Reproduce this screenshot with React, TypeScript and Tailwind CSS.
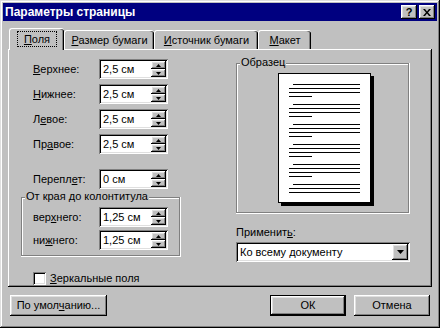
import type { ReactNode } from 'react';

const raised =
  'shadow-[inset_-1px_-1px_#000,inset_1px_1px_#fff,inset_-2px_-2px_#808080,inset_2px_2px_#dfdfdf]';
const panelEdge =
  'shadow-[inset_-1px_-1px_#000,inset_1px_1px_#fff,inset_-2px_-2px_#808080,inset_2px_2px_#c0c0c0]';
const sunken =
  'shadow-[inset_1px_1px_#808080,inset_-1px_-1px_#fff,inset_2px_2px_#000,inset_-2px_-2px_#dfdfdf]';
const etched =
  'shadow-[inset_-1px_-1px_#fff,inset_-2px_-2px_#808080,inset_1px_1px_#808080,inset_2px_2px_#fff]';

function Arrow({ down = false }: { down?: boolean }) {
  return (
    <svg width="5" height="3" viewBox="0 0 5 3" className="block">
      {down ? <path d="M0 0h5L2.5 3z" fill="#000" /> : <path d="M0 3h5L2.5 0z" fill="#000" />}
    </svg>
  );
}

function Spin({ value }: { value: string }) {
  return (
    <div className={`flex h-[20px] w-[69px] bg-white p-[2px] ${sunken}`}>
      <span className="flex-1 pl-[2px] leading-[16px]">{value}</span>
      <div className="flex w-[15px] flex-col">
        <div className={`flex h-[8px] items-center justify-center bg-[#c0c0c0] ${raised}`}>
          <Arrow />
        </div>
        <div className={`flex h-[8px] items-center justify-center bg-[#c0c0c0] ${raised}`}>
          <Arrow down />
        </div>
      </div>
    </div>
  );
}

function Field({ label, value }: { label: ReactNode; value: string }) {
  return (
    <div className="flex h-[20px] items-center">
      <span className="w-[66px]">{label}</span>
      <Spin value={value} />
    </div>
  );
}

function Tab({ children, width, active = false }: { children: ReactNode; width: string; active?: boolean }) {
  return (
    <div
      className={`flex items-center justify-center rounded-t-[3px] border-l border-t border-white bg-[#c0c0c0] shadow-[inset_-1px_0_#000,inset_-2px_0_#808080] ${width} ${
        active ? 'relative z-10 -mb-px h-[22px] pb-[2px]' : 'h-[19px]'
      }`}
    >
      {children}
    </div>
  );
}

function Button({ children, width, primary = false }: { children: ReactNode; width: string; primary?: boolean }) {
  return (
    <div
      className={`flex h-[21px] items-center justify-center bg-[#c0c0c0] ${width} ${
        primary ? 'border border-black' : ''
      } ${raised}`}
    >
      {children}
    </div>
  );
}

function TextBlock({ lines }: { lines: number }) {
  return (
    <div className="flex flex-col gap-[3px]">
      <div className="ml-[4px] h-px w-[67px] bg-black" />
      <div className="h-px w-[71px] bg-black" />
      <div className="h-px w-[71px] bg-black" />
      {lines > 3 && <div className="h-px w-[23px] bg-black" />}
    </div>
  );
}

export default function App() {
  return (
    <div
      className={`h-[328px] w-[440px] bg-[#c0c0c0] p-[3px] font-['Liberation_Sans',Arial,sans-serif] text-[11px] text-black shadow-[inset_-1px_-1px_#000,inset_1px_1px_#dfdfdf,inset_-2px_-2px_#808080,inset_2px_2px_#fff]`}
    >
      {/* title bar */}
      <div className="flex h-[18px] items-center justify-between bg-[#000080] pl-[2px] pr-[2px]">
        <span className="text-[12px] font-bold text-white">Параметры страницы</span>
        <div className="flex gap-[2px]">
          <div className={`flex h-[14px] w-[16px] items-center justify-center bg-[#c0c0c0] text-[11px] font-bold leading-none ${raised}`}>
            ?
          </div>
          <div className={`flex h-[14px] w-[16px] items-center justify-center bg-[#c0c0c0] ${raised}`}>
            <svg width="8" height="7" viewBox="0 0 8 7">
              <path d="M0 0h2l2 2.5L6 0h2L5 3.5 8 7H6L4 4.5 2 7H0l3-3.5z" fill="#000" />
            </svg>
          </div>
        </div>
      </div>

      <div className="mx-[5px] mt-[7px]">
        {/* tabs */}
        <div className="flex h-[21px] items-end pl-px">
          <Tab width="w-[55px]" active>
            <span className="px-[6px] leading-[14px] outline outline-1 outline-dotted outline-black">
              <span className="underline">П</span>оля
            </span>
          </Tab>
          <Tab width="w-[90px]">
            <span>
              <span className="underline">Р</span>азмер бумаги
            </span>
          </Tab>
          <Tab width="w-[104px]">
            <span>
              <span className="underline">И</span>сточник бумаги
            </span>
          </Tab>
          <Tab width="w-[53px]">
            <span>
              <span className="underline">М</span>акет
            </span>
          </Tab>
        </div>

        {/* tab panel */}
        <div className={`flex h-[238px] ${panelEdge}`}>
          <div className="flex w-[228px] flex-col pt-[10px]">
            <div className="flex flex-col gap-[5px] pl-[25px]">
              <Field label={<><span className="underline">В</span>ерхнее:</>} value="2,5 см" />
              <Field label={<><span className="underline">Н</span>ижнее:</>} value="2,5 см" />
              <Field label={<>Л<span className="underline">е</span>вое:</>} value="2,5 см" />
              <Field label={<>Пр<span className="underline">а</span>вое:</>} value="2,5 см" />
            </div>
            <div className="mt-[15px] pl-[25px]">
              <Field label={<>Перепл<span className="underline">е</span>т:</>} value="0 см" />
            </div>

            <div className={`relative ml-[13px] mt-[8px] flex h-[60px] w-[160px] flex-col gap-[3px] pl-[12px] pt-[10px] ${etched}`}>
              <span className="absolute left-[4px] top-[-7px] bg-[#c0c0c0] px-px leading-[13px]">
                От края до колонтитула
              </span>
              <Field label={<>вер<span className="underline">х</span>него:</>} value="1,25 см" />
              <Field label={<>ни<span className="underline">ж</span>него:</>} value="1,25 см" />
            </div>

            <div className="mt-[13px] flex items-center gap-[4px] pl-[25px]">
              <div className={`h-[13px] w-[13px] bg-white ${sunken}`} />
              <span>
                <span className="underline">З</span>еркальные поля
              </span>
            </div>
          </div>

          <div className="flex w-[174px] flex-col pt-[14px]">
            <div className={`relative h-[151px] pl-[42px] pt-[10px] ${etched}`}>
              <span className="absolute left-[4px] top-[-7px] bg-[#c0c0c0] px-px leading-[13px]">Образец</span>
              <div className="h-[130px] w-[93px] border border-black bg-white pl-[10px] pt-[10px] shadow-[3px_3px_0_#000]">
                <div className="flex flex-col gap-[7px]">
                  <TextBlock lines={4} />
                  <TextBlock lines={4} />
                  <TextBlock lines={4} />
                  <TextBlock lines={4} />
                  <TextBlock lines={4} />
                  <TextBlock lines={3} />
                </div>
              </div>
            </div>
            <span className="mt-[11px] leading-[14px]">
              Применит<span className="underline">ь</span>:
            </span>
            <div className={`mt-[3px] flex h-[20px] items-stretch bg-white p-[2px] ${sunken}`}>
              <span className="flex-1 pl-[2px] leading-[16px]">Ко всему документу</span>
              <div className={`flex w-[16px] items-center justify-center bg-[#c0c0c0] ${raised}`}>
                <svg width="7" height="4" viewBox="0 0 7 4">
                  <path d="M0 0h7L3.5 4z" fill="#000" />
                </svg>
              </div>
            </div>
          </div>
        </div>

        {/* bottom buttons */}
        <div className="mt-[8px] flex items-center px-[2px]">
          <Button width="w-[97px]">
            <span>
              По умол<span className="underline">ч</span>анию...
            </span>
          </Button>
          <div className="ml-auto flex gap-[8px]">
            <Button width="w-[76px]" primary>
              ОК
            </Button>
            <Button width="w-[76px]">Отмена</Button>
          </div>
        </div>
      </div>
    </div>
  );
}
